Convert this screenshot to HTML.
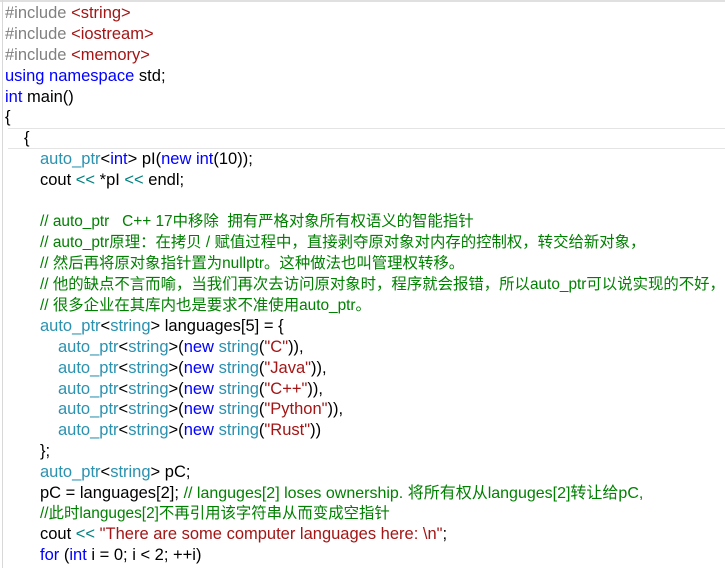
<!DOCTYPE html>
<html><head><meta charset="utf-8"><style>
body{margin:0;width:725px;height:568px;background:#fff;overflow:hidden;position:relative;font-family:"Liberation Sans","Noto Sans CJK SC",sans-serif;font-size:16.5px;color:#000;}
.bar{position:absolute;left:2px;top:0;width:1px;height:568px;background:#d8d8d8}
.top{position:absolute;left:0;top:0;width:725px;height:2px;background:#e0e0e0}
.cur{position:absolute;left:8px;top:128px;width:717px;height:19px;border:1px solid #e4e4e4;border-left:none}
.l{position:absolute;white-space:pre;height:21px;line-height:21px}
.z{font-size:15.4px}
.p{color:#808080}.s{color:#a31515}.k{color:#0000ff}.t{color:#2b91af}.c{color:#008000}.o{color:#008080}
</style></head><body>
<div class="top"></div><div class="bar"></div><div class="cur"></div>
<div class="l" style="left:5px;top:3px"><span class="p">#include</span> <span class="s">&lt;string&gt;</span></div>
<div class="l" style="left:5px;top:24px"><span class="p">#include</span> <span class="s">&lt;iostream&gt;</span></div>
<div class="l" style="left:5px;top:45px"><span class="p">#include</span> <span class="s">&lt;memory&gt;</span></div>
<div class="l" style="left:5px;top:66px"><span class="k">using namespace</span> std;</div>
<div class="l" style="left:5px;top:87px"><span class="k">int</span> main()</div>
<div class="l" style="left:5px;top:107px">{</div>
<div class="l" style="left:24px;top:128px">{</div>
<div class="l" style="left:40px;top:149px"><span class="t">auto_ptr</span>&lt;<span class="k">int</span>&gt; pI(<span class="k">new int</span>(10));</div>
<div class="l" style="left:40px;top:170px">cout <span class="o">&lt;&lt;</span> *pI <span class="o">&lt;&lt;</span> endl;</div>
<div class="l c z" style="left:40px;top:211px">// auto_ptr   C++ 17中移除  拥有严格对象所有权语义的智能指针</div>
<div class="l c z" style="left:40px;top:232px">// auto_ptr原理：在拷贝 / 赋值过程中，直接剥夺原对象对内存的控制权，转交给新对象，</div>
<div class="l c z" style="left:40px;top:253px">// 然后再将原对象指针置为nullptr。这种做法也叫管理权转移。</div>
<div class="l c z" style="left:40px;top:274px">// 他的缺点不言而喻，当我们再次去访问原对象时，程序就会报错，所以auto_ptr可以说实现的不好，</div>
<div class="l c z" style="left:40px;top:295px">// 很多企业在其库内也是要求不准使用auto_ptr。</div>
<div class="l" style="left:40px;top:316px"><span class="t">auto_ptr</span>&lt;<span class="t">string</span>&gt; languages[5] = {</div>
<div class="l" style="left:58px;top:337px"><span class="t">auto_ptr</span>&lt;<span class="t">string</span>&gt;(<span class="k">new</span> <span class="t">string</span>(<span class="s">"C"</span>)),</div>
<div class="l" style="left:58px;top:358px"><span class="t">auto_ptr</span>&lt;<span class="t">string</span>&gt;(<span class="k">new</span> <span class="t">string</span>(<span class="s">"Java"</span>)),</div>
<div class="l" style="left:58px;top:379px"><span class="t">auto_ptr</span>&lt;<span class="t">string</span>&gt;(<span class="k">new</span> <span class="t">string</span>(<span class="s">"C++"</span>)),</div>
<div class="l" style="left:58px;top:399px"><span class="t">auto_ptr</span>&lt;<span class="t">string</span>&gt;(<span class="k">new</span> <span class="t">string</span>(<span class="s">"Python"</span>)),</div>
<div class="l" style="left:58px;top:420px"><span class="t">auto_ptr</span>&lt;<span class="t">string</span>&gt;(<span class="k">new</span> <span class="t">string</span>(<span class="s">"Rust"</span>))</div>
<div class="l" style="left:40px;top:441px">};</div>
<div class="l" style="left:40px;top:462px"><span class="t">auto_ptr</span>&lt;<span class="t">string</span>&gt; pC;</div>
<div class="l" style="left:40px;top:483px">pC = languages[2]; <span class="c" style="font-size:16px">// languges[2] loses ownership. 将所有权从languges[2]转让给pC,</span></div>
<div class="l c z" style="left:40px;top:503px">//此时languges[2]不再引用该字符串从而变成空指针</div>
<div class="l" style="left:40px;top:524px">cout <span class="o">&lt;&lt;</span> <span class="s">"There are some computer languages here: \n"</span>;</div>
<div class="l" style="left:40px;top:545px"><span class="k">for</span> (<span class="k">int</span> i = 0; i &lt; 2; ++i)</div>
</body></html>
